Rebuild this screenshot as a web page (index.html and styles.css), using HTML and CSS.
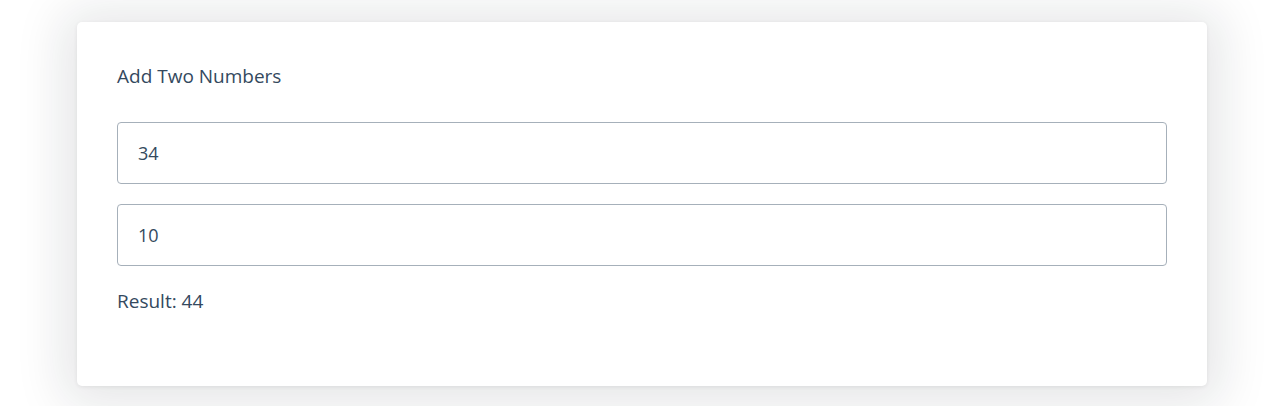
FILE: index.html
```html
<!DOCTYPE html>
<html>
<head>
<meta charset="utf-8">
<link rel="stylesheet" href="styles.css">
</head>
<body>
<div class="page">
  <div class="card">
    <div class="title">Add Two Numbers</div>
    <input class="field" type="text" value="34">
    <input class="field" type="text" value="10">
    <div class="result">Result: 44</div>
  </div>
</div>
</body>
</html>
```
FILE: styles.css
```css
html, body {
  margin: 0;
  padding: 0;
  background: #ffffff;
}
body {
  font-family: "Open Sans", "Noto Sans", sans-serif;
  color: #34495e;
}
.page {
  padding: 22px 57px 20px 77px;
  background: #ffffff;
  height: 406px;
  box-sizing: border-box;
}
.card {
  width: 1130px;
  height: 364px;
  box-sizing: border-box;
  background: #ffffff;
  border-radius: 5px;
  box-shadow: 0 4px 50px 14px rgba(20, 30, 40, 0.11), 0 1px 4px rgba(0, 0, 0, 0.07);
  padding: 42px 40px 0 40px;
  display: flex;
  flex-direction: column;
}
.title {
  font-size: 19px;
  line-height: 24px;
  margin-bottom: 34px;
}
.field {
  display: block;
  width: 1050px;
  height: 62px;
  box-sizing: border-box;
  border: 1px solid #a6b0ba;
  border-radius: 4px;
  padding: 0 20px;
  font-family: inherit;
  font-size: 18px;
  color: #34495e;
  outline: none;
  margin: 0 0 20px 0;
}
.result {
  font-size: 19px;
  line-height: 22px;
  margin-top: 4px;
}
```
